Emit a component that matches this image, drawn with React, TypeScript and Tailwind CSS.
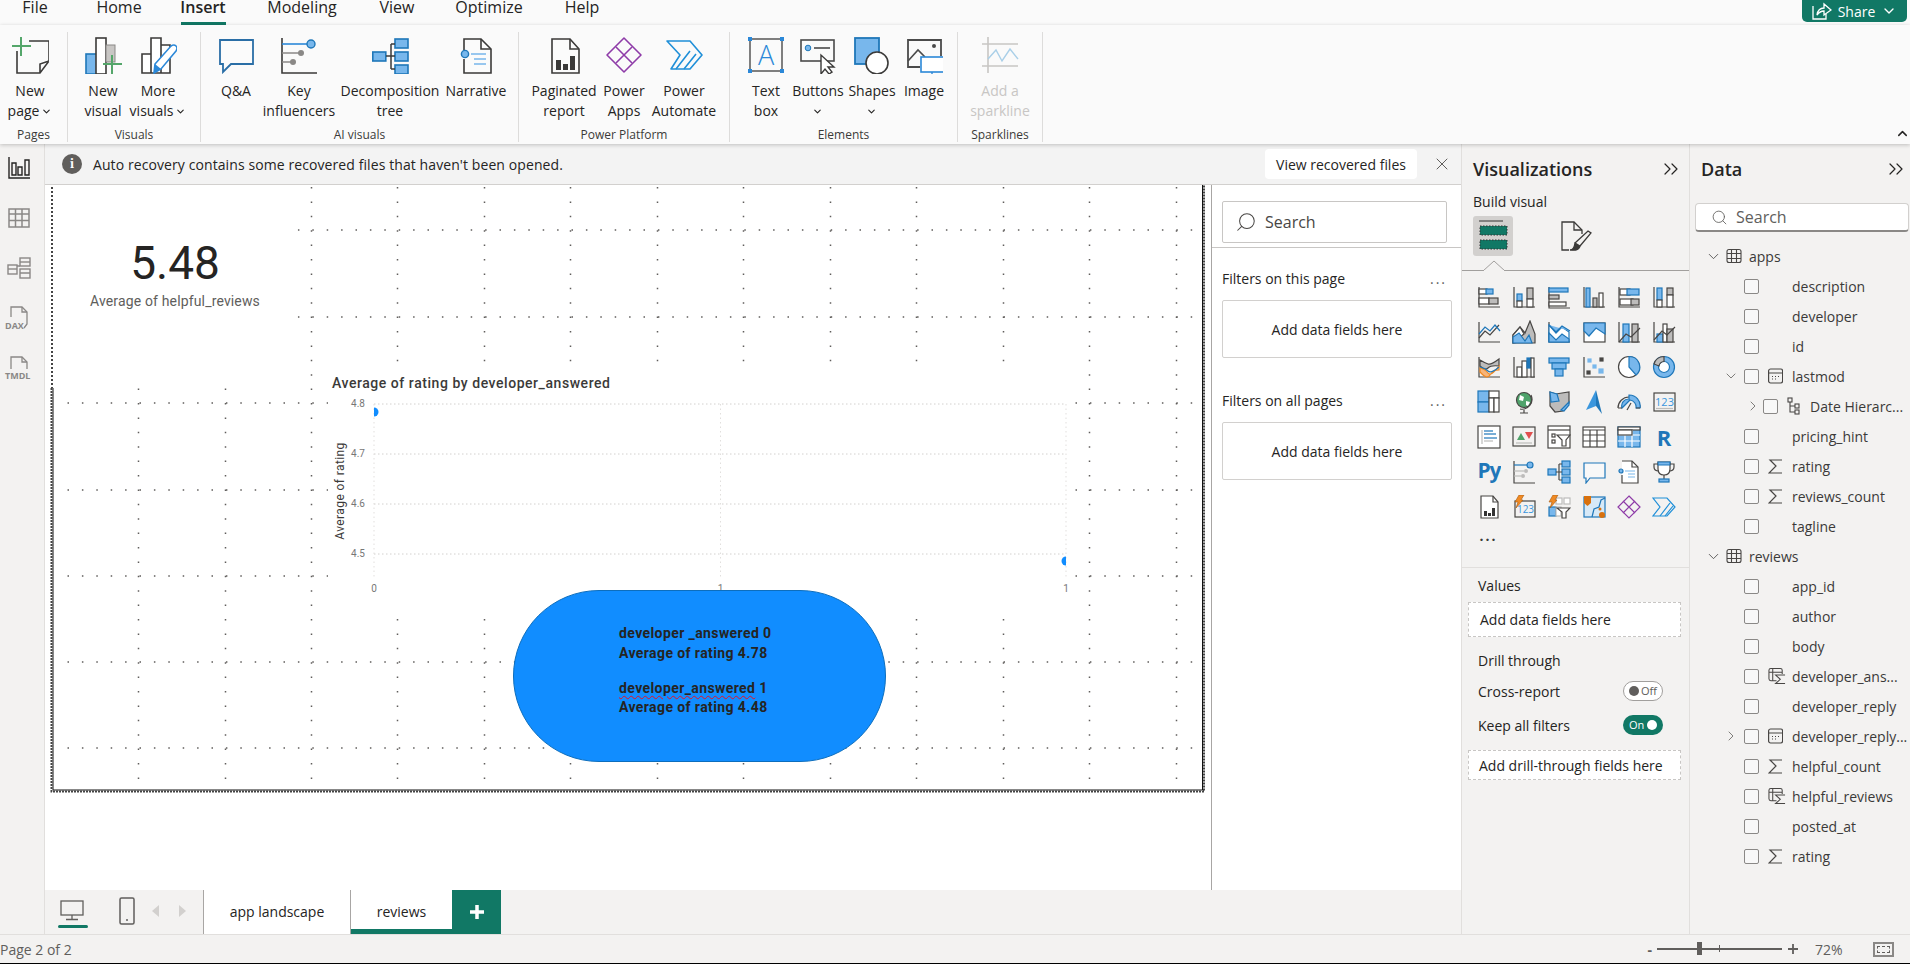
import type { ReactNode } from 'react';
import { ChevronDown, ChevronRight, ChevronUp, ChevronsRight, Search, X } from 'lucide-react';

const Dk = '#484644';
const Bl = '#1f77b9';
const Lb = '#78b7ec';
const Gy = '#bdbcbb';
const Wh = '#ffffff';

const r = (x: number, y: number, w: number, h: number, f = 'none', s = Dk) => (
  <rect x={x} y={y} width={w} height={h} fill={f} stroke={s} />
);
const p = (d: string, s = Dk, f = 'none') => <path d={d} stroke={s} fill={f} />;
const Ax = p('M2 2V22H23');

function Glyph({ children, size = 24 }: { children: ReactNode; size?: number }) {
  return (
    <svg width={size} height={size} viewBox="0 0 24 24" strokeWidth={1.2} className="shrink-0">
      {children}
    </svg>
  );
}

// small chart icons of the Visualizations pane, row by row
const vizIcons: ReactNode[] = [
  <>{Ax}{r(2, 4, 8, 5, Wh)}{r(9, 4, 7, 5, Lb, Bl)}{r(2, 13, 10, 6, Wh)}{r(12, 13, 9, 6, Gy)}</>,
  <>{Ax}{r(5, 9, 5, 7, Lb, Bl)}{r(5, 16, 5, 6, Wh)}{r(15, 3, 6, 11, Gy)}{r(15, 14, 6, 8, Wh)}</>,
  <>{p('M2 2V23H23')}{r(2, 3, 19, 4, Lb, Bl)}{r(2, 10, 10, 4, Gy)}{r(2, 17, 17, 4, Wh)}</>,
  <>{Ax}{r(4, 3, 4, 19, Lb, Bl)}{r(11, 13, 4, 9, Gy)}{r(17, 8, 4, 14, Wh)}</>,
  <>{Ax}{r(3, 4, 10, 6, Wh)}{r(10, 4, 12, 6, Lb, Bl)}{r(3, 14, 13, 6, Wh)}{r(14, 14, 8, 6, Gy)}</>,
  <>{Ax}{r(5, 3, 5, 12, Lb, Bl)}{r(5, 15, 5, 7, Wh)}{r(15, 3, 6, 7, Gy)}{r(15, 10, 6, 12, Wh)}</>,
  <>{Ax}{p('M2 18L8 11L13 15L22 5')}{p('M2 14L8 7L13 11L18 5L23 11', Bl)}</>,
  <>{p('M1 23V15L8 7L13 13L18 1L23 14V23Z', Dk, Gy)}{p('M1 15L8 7L12 14L8 17L12 21L1 23Z', Dk, Wh)}{p('M1 23V17L7 13L13 21L17 15L20 23Z', Bl, Lb)}</>,
  <>{Ax}{p('M2 5L9 13L15 7L22 12V22H2Z', Bl, Wh)}{p('M2 13L9 20L15 14L22 19V22H2Z', Bl, Lb)}{p('M2 5L9 12L15 6L23 11', Bl, Lb)}</>,
  <>{r(2, 3, 21, 19, Wh)}{p('M2 3H23V14L14 8L7 16L2 11Z', Bl, Lb)}</>,
  <>{Ax}{r(6, 4, 6, 18, Lb, Bl)}{r(15, 4, 6, 18, Gy)}{p('M2 22L9 14L14 17L23 8')}</>,
  <>{Ax}{r(5, 14, 6, 8, Lb, Bl)}{r(11, 4, 4, 18, Wh)}{r(15, 9, 6, 13, Gy)}{p('M2 20L10 11L15 15L23 7')}</>,
  <>{Ax}{p('M3 5Q8 8 11 9T22 4V11Q14 10 11 13T3 11Z', Dk, Gy)}{p('M3 13Q8 14 11 18T22 11V15Q16 15 13 20T3 17Z', '#f08a24', '#f7b57a')}{p('M3 12Q8 13 11 16T22 12', Bl)}</>,
  <>{Ax}{r(5, 12, 5, 10, Wh)}{r(10, 6, 5, 16, Wh)}{r(15, 3, 4, 10, Bl, Bl)}{r(19, 3, 3, 19, Wh)}</>,
  <>{r(2, 3, 20, 5, Lb, Bl)}{r(5, 8, 14, 6, Lb, Bl)}{r(8, 14, 8, 7, Lb, Bl)}</>,
  <>{Ax}{r(6, 4, 3, 3, Lb, Lb)}{r(18, 3, 3, 3, Dk)}{r(11, 10, 3, 3, Lb, Lb)}{r(17, 14, 4, 4, Lb, Lb)}{r(5, 16, 3, 3, Dk)}</>,
  <><circle cx="12" cy="12" r="10.5" fill={Wh} stroke={Dk} />{p('M12 1.5A10.5 10.5 0 0 1 19 20L12 12Z', Bl, Lb)}</>,
  <><circle cx="12" cy="12" r="10.5" fill={Lb} stroke={Bl} /><circle cx="12" cy="12" r="5.5" fill={Wh} stroke={Bl} />{p('M12 1.5A10.5 10.5 0 0 0 2 9L7 11A5.5 5.5 0 0 1 12 6.5Z', Dk, Gy)}</>,
  <>{r(1, 1, 11, 11, Lb, Bl)}{r(1, 12, 11, 10, Lb, Bl)}{r(12, 1, 10, 7, Wh)}{r(12, 8, 5, 14, Wh)}{r(17, 8, 5, 14, Wh)}</>,
  <><circle cx="12" cy="10" r="7.5" fill="#4fa36b" stroke={Dk} /><path d="M8 5l4 2-1 4-4-1zM14 11l4 1-2 4-2-1z" fill="#fff" />{p('M19 5A10 10 0 0 1 8 19M12 20V23M8 23H16')}</>,
  <>{p('M3 2L9 4L15 3L22 2V13L16 21L8 22L3 16Z', Dk, Gy)}{p('M3 2L10 4L12 11L4 12Z', Bl, Lb)}{p('M14 20L22 12V15L17 21Z', Bl, Lb)}</>,
  <><path d="M14 0L4 20L14 16Z" fill="#3a96dd" /><path d="M14 0L20 24L14 16Z" fill="#1f77b9" /></>,
  <>{p('M1 18A11 11 0 0 1 23 18', Dk)}<path d="M5 18A7 7 0 0 1 12 9V5A11 11 0 0 1 23 18H19A7 7 0 0 0 13 10Z" fill={Lb} stroke={Bl} />{p('M10 20L14 13', Dk)}{p('M1 18H5M19 18H23')}</>,
  <>{r(2, 3, 21, 18, '#f3f2f1')}<text x="12.5" y="16" fontSize="11" fill="#3a96dd" textAnchor="middle" stroke="none">123</text>{p('M4 18.5H21', Gy)}</>,
  <>{r(1, 1, 22, 22, Wh)}{p('M5 5V19', Gy)}{p('M7 6H16', Bl)}{p('M7 9H19', Bl)}{p('M7 13H20', Bl)}{p('M7 16H16', Gy)}</>,
  <>{r(1, 2, 22, 19, '#f3f2f1')}<path d="M5 15L9 8L13 15Z" fill="#4fa36b" /><path d="M13 7H21L17 14Z" fill="#e0504f" />{p('M4 18H20', Gy)}</>,
  <>{r(1, 1, 22, 22, Wh)}{p('M1 5H23')}{r(5, 9, 3, 3)}{r(5, 15, 3, 3)}<path d="M10 10H23L19 15V21H15V15Z" fill={Wh} stroke={Dk} /></>,
  <>{r(1, 2, 22, 20, Wh)}{p('M1 5H23M1 10H23M1 16H23M8 5V22M15 5V22')}</>,
  <>{r(1, 2, 22, 20, Lb, Bl)}{r(1, 2, 22, 3, Wh)}{p('M1 10H23M1 16H23M8 5V22M15 5V22', Wh)}{r(1, 5, 14, 5, Wh, Dk)}</>,
  <text x="12" y="21" fontSize="22" fontWeight="700" fill="#1f77b9" textAnchor="middle" stroke="none">R</text>,
  <text x="12" y="18" fontSize="21" fontWeight="700" fill="#1f77b9" textAnchor="middle" stroke="none" letterSpacing="-1">Py</text>,
  <>{p('M2 1V23H23')}{p('M2 5H15', Bl)}<circle cx="18" cy="5" r="3" fill={Lb} stroke={Bl} />{p('M2 11H12', Gy)}<circle cx="14" cy="11" r="2" fill={Gy} />{p('M2 16H9', Gy)}<circle cx="11" cy="16" r="2" fill={Gy} /></>,
  <>{r(1, 9, 8, 6, Lb, Bl)}{r(15, 1, 8, 6, Lb, Bl)}{r(15, 9, 8, 6, Lb, Bl)}{r(15, 17, 8, 6, Lb, Bl)}{p('M9 12H15M12 4V20M12 4H15M12 20H15')}</>,
  <>{p('M2 3H23V18H8L4 23V18H2Z', Bl, '#f8f8f8')}</>,
  <>{p('M5 1H15L21 7V23H5V15', Dk, Wh)}{p('M15 1V7H21')}<circle cx="4" cy="11" r="2" fill={Lb} stroke={Bl} />{p('M8 11H18M11 14H18M11 17H18', Lb)}</>,
  <>{p('M6 2H18V9Q18 15 12 15Q6 15 6 9Z', Dk, '#fff')}{p('M6 2H18V5H6Z', Bl, Lb)}{p('M6 4H2V7Q2 11 7 11M18 4H22V7Q22 11 17 11M12 15V19')}{r(7, 19, 10, 3, Lb, Bl)}</>,
  <>{p('M4 1H16L21 7V23H4Z', Dk, Wh)}{p('M16 1V7H21')}<rect x="7" y="16" width="3" height="5" fill="#333" /><rect x="11" y="18" width="3" height="3" fill="#333" /><rect x="15" y="13" width="3" height="8" fill="#333" /></>,
  <>{r(3, 6, 20, 16, '#f3f2f1')}<text x="13.5" y="18" fontSize="10" fill="#3a96dd" textAnchor="middle" stroke="none">123</text><path d="M7 0H12L9 5H11L4 13L6 7H3Z" fill="#f08a24" stroke="#a85b10" strokeWidth=".6" /></>,
  <>{r(9, 3, 6, 6, Wh, Gy)}{r(17, 3, 6, 6, Wh, Gy)}{r(2, 12, 7, 9, Lb, Bl)}{r(9, 12, 5, 9, Wh, Gy)}<path d="M10 13H23L19 17V23H15V17Z" fill={Wh} stroke={Dk} /><path d="M6 0H11L8 5H10L3 13L5 7H2Z" fill="#f08a24" stroke="#a85b10" strokeWidth=".6" /></>,
  <>{r(2, 2, 21, 20, '#d7e9f7', Bl)}{p('M10 22L12 14L17 12L19 5L23 3', Bl, 'none')}<path d="M2 1H9V8L5.5 11L2 8Z" fill="#d8710e" /><circle cx="20" cy="20" r="3" fill="#d8710e" /><circle cx="18" cy="14" r="1.5" fill="#d8710e" /></>,
  <>{p('M12 1L23 12L12 23L1 12Z', '#8e3ba8', 'none')}{p('M6 6L12 12L6 18M18 6L12 12L18 18', '#8e3ba8')}</>,
  <>{p('M1 3H15L23 12L15 21H1L8 12Z', '#1f8fd8', 'none')}{p('M8 21L18 8M13 21L21 11', '#1f8fd8')}</>,
];

const ribbonIcons: Record<string, ReactNode> = {
  newPage: (
    <>
      <path d="M5 14V36H28L37 24V4H17M28 36V27L37 24" stroke="#3b3a39" fill="none" strokeWidth="1.6" />
      <path d="M9 0V19M0 9H19" stroke="#54a66a" strokeWidth="2" />
    </>
  ),
  newVisual: (
    <>
      <rect x="1" y="17" width="13" height="20" fill={Lb} stroke={Bl} strokeWidth="1.6" />
      <rect x="11" y="1" width="10" height="36" fill={Wh} stroke="#3b3a39" strokeWidth="1.6" />
      <rect x="21" y="8" width="9" height="17" fill="#c8c6c4" stroke="#8a8886" />
      <path d="M27 18V37M18 27H37" stroke="#54a66a" strokeWidth="2" />
    </>
  ),
  moreVisuals: (
    <>
      <path d="M2 36V17H11V36ZM11 36V1H21V36H11M21 8H30V36H21" fill={Wh} stroke="#3b3a39" strokeWidth="1.6" />
      <path d="M14 36L15 27L31 9Q34 7 36 9T36 14L21 32Z" fill={Wh} stroke="#2b88d8" strokeWidth="1.6" />
      <path d="M15 27L21 32L14 36Z" fill="#2b88d8" />
    </>
  ),
  qa: <path d="M2 3H35V27H13L5 35V27H2Z" fill="#fbfbfb" stroke="#2a6ea6" strokeWidth="1.8" />,
  key: (
    <>
      <path d="M1 1V36H36" stroke="#3b3a39" fill="none" strokeWidth="1.6" />
      <path d="M1 7H26" stroke="#2b88d8" strokeWidth="1.6" />
      <circle cx="30" cy="7" r="4" fill={Lb} stroke={Bl} strokeWidth="1.4" />
      <path d="M1 16H18M1 25H10" stroke="#8a8886" strokeWidth="1.6" />
      <circle cx="20" cy="16" r="3" fill="#8a8886" />
      <circle cx="12" cy="25" r="3" fill="#8a8886" />
    </>
  ),
  decomp: (
    <>
      <rect x="0.8" y="15" width="13" height="9" fill={Lb} stroke={Bl} strokeWidth="1.6" />
      <rect x="23" y="2" width="13" height="9" fill={Lb} stroke={Bl} strokeWidth="1.6" />
      <rect x="23" y="15" width="13" height="9" fill={Lb} stroke={Bl} strokeWidth="1.6" />
      <rect x="23" y="28" width="13" height="9" fill={Lb} stroke={Bl} strokeWidth="1.6" />
      <path d="M14 19H23M19 7V32M19 7H23M19 32H23" stroke="#3b3a39" strokeWidth="1.5" />
    </>
  ),
  narrative: (
    <>
      <path d="M6 13V2H23L33 12V36H6V22" stroke="#3b3a39" fill="#fbfbfb" strokeWidth="1.6" />
      <path d="M23 2V12H33" stroke="#3b3a39" fill="none" strokeWidth="1.6" />
      <circle cx="7" cy="17" r="3.6" fill={Lb} stroke={Bl} strokeWidth="1.4" />
      <path d="M13 17H28M16 22H28M16 27H28" stroke={Lb} strokeWidth="1.6" />
    </>
  ),
  paginated: (
    <>
      <path d="M6 2H24L33 12V36H6Z" stroke="#3b3a39" fill="#fbfbfb" strokeWidth="1.6" />
      <path d="M24 2V12H33" stroke="#3b3a39" fill="none" strokeWidth="1.6" />
      <rect x="10" y="23" width="5" height="10" fill="#3b3a39" />
      <rect x="17" y="27" width="5" height="6" fill="#3b3a39" />
      <rect x="24" y="19" width="5" height="14" fill="#3b3a39" />
    </>
  ),
  apps: (
    <g stroke="#8e3ba8" strokeWidth="1.6" fill="none" strokeLinejoin="round">
      <path d="M18 1L35 18L18 35L1 18Z" />
      <path d="M10 10L18 18L10 26M26 10L18 18L26 26" />
    </g>
  ),
  automate: (
    <g stroke="#1f8fd8" strokeWidth="1.6" fill="none" strokeLinejoin="round">
      <path d="M1 4H24L36 18L24 32H5L14 18Z" />
      <path d="M10 32L24 14M18 32L30 17" />
    </g>
  ),
  textBox: (
    <>
      <rect x="2" y="2" width="32" height="32" fill="none" stroke="#4a4a4a" strokeWidth="1.4" />
      <g fill="#2b88d8">
        <rect x="0" y="0" width="4" height="4" />
        <rect x="32" y="0" width="4" height="4" />
        <rect x="0" y="32" width="4" height="4" />
        <rect x="32" y="32" width="4" height="4" />
      </g>
      <text x="18" y="28" fontSize="27" fill="#2b88d8" textAnchor="middle" fontFamily="Open Sans, sans-serif" fontWeight="300">A</text>
    </>
  ),
  buttons: (
    <>
      <rect x="1" y="3" width="33" height="21" fill="none" stroke="#4a4a4a" strokeWidth="1.6" />
      <circle cx="8" cy="11" r="2.8" fill={Lb} stroke={Bl} />
      <path d="M14 11H30" stroke="#4a4a4a" strokeWidth="1.6" />
      <path d="M21 18V37L25 32L29 37L32 35L28 30H34Z" fill={Wh} stroke="#3b3a39" strokeWidth="1.4" />
    </>
  ),
  shapes: (
    <>
      <rect x="1" y="1" width="24" height="26" fill={Lb} stroke={Bl} strokeWidth="1.8" />
      <circle cx="23" cy="26" r="11" fill={Wh} stroke="#3b3a39" strokeWidth="1.6" />
    </>
  ),
  image: (
    <>
      <path d="M14 30H2V3H35V19" fill="none" stroke="#4a4a4a" strokeWidth="1.8" />
      <path d="M2 24L12 13L19 20" fill="none" stroke="#4a4a4a" strokeWidth="1.6" />
      <circle cx="28" cy="9" r="2" fill="#4a4a4a" />
      <rect x="15" y="20" width="23" height="15" fill={Wh} stroke="#2b88d8" strokeWidth="1.6" />
      <path d="M26 35V38M22 38.5H30" stroke="#2b88d8" strokeWidth="1.4" />
    </>
  ),
  sparkline: (
    <>
      <path d="M6 0V36M0 7H36M0 29H36" stroke="#c8c6c4" strokeWidth="1.6" />
      <path d="M6 22L14 13L20 24L28 12L36 22" stroke="#a9cfe8" fill="none" strokeWidth="1.4" />
    </>
  ),
};

function RibbonItem({ icon, lines, width, disabled, caret }: { icon: string; lines: string[]; width: number; disabled?: boolean; caret?: 'inline' | 'below' }) {
  return (
    <div className="flex shrink-0 flex-col items-center" style={{ width }}>
      <svg width="38" height="38" viewBox="-1 -1 38 38" className="mt-[4px] shrink-0">
        {ribbonIcons[icon]}
      </svg>
      <div className={`mt-[7px] whitespace-nowrap text-center text-[14px] leading-[20px] ${disabled ? 'text-[#c8c6c4]' : 'text-[#252423]'}`}>
        {lines.map((l, i) => (
          <div key={l} className="flex items-center justify-center gap-[2px]">
            {l}
            {caret === 'inline' && i === 1 && <ChevronDown size={11} strokeWidth={2.4} />}
          </div>
        ))}
        {caret === 'below' && (
          <div className="flex h-[20px] items-center justify-center">
            <ChevronDown size={11} strokeWidth={2.4} />
          </div>
        )}
      </div>
    </div>
  );
}

function RibbonGroup({ label, width, pad = 0, children }: { label: string; width: number; pad?: number; children: ReactNode }) {
  return (
    <div className="flex h-[110px] shrink-0 flex-col border-r border-[#dddcdb]" style={{ width }}>
      <div className="flex h-[96px] shrink-0" style={{ paddingLeft: pad }}>
        {children}
      </div>
      <div className="text-center text-[12px] leading-[14px] text-[#3b3a39]">{label}</div>
    </div>
  );
}

const tabs = [
  { name: 'File', w: 'w-[70px]' },
  { name: 'Home', w: 'w-[98px]' },
  { name: 'Insert', w: 'w-[70px]' },
  { name: 'Modeling', w: 'w-[128px]' },
  { name: 'View', w: 'w-[62px]' },
  { name: 'Optimize', w: 'w-[122px]' },
  { name: 'Help', w: 'w-[64px]' },
];

function TopBar() {
  return (
    <div className="flex h-[25px] shrink-0 bg-[#fafafa]">
      {tabs.map((t) => (
        <div key={t.name} className={`relative h-full text-center text-[16px] leading-[15px] text-[#252423] ${t.w} ${t.name === 'Insert' ? 'font-semibold' : ''}`}>
          {t.name}
          {t.name === 'Insert' && <div className="absolute bottom-0 left-[13px] h-[3px] w-[45px] bg-[#117865]" />}
        </div>
      ))}
      <div className="ml-auto mr-[3px] flex h-[22px] w-[105px] items-center justify-center gap-[6px] rounded-b-[5px] bg-[#117865] text-[14px] text-white">
        <svg width="20" height="18" viewBox="0 0 20 18" fill="none" stroke="#fff" strokeWidth="1.3">
          <path d="M1 4V17H14V12" />
          <path d="M5 13Q6 6 12 6V2L19 8L12 13V9Q8 9 5 13Z" />
        </svg>
        Share
        <ChevronDown size={16} />
      </div>
    </div>
  );
}

function Ribbon() {
  return (
    <div className="relative z-10 flex h-[119px] shrink-0 bg-[#fafafa] pt-[7px] shadow-[0_1px_4px_rgba(0,0,0,0.22)]">
      <RibbonGroup label="Pages" width={68}>
        <RibbonItem icon="newPage" lines={['New', 'page']} width={60} caret="inline" />
      </RibbonGroup>
      <RibbonGroup label="Visuals" width={133} pad={7}>
        <RibbonItem icon="newVisual" lines={['New', 'visual']} width={56} />
        <RibbonItem icon="moreVisuals" lines={['More', 'visuals']} width={54} caret="inline" />
      </RibbonGroup>
      <RibbonGroup label="AI visuals" width={318} pad={10}>
        <RibbonItem icon="qa" lines={['Q&A']} width={50} />
        <RibbonItem icon="key" lines={['Key', 'influencers']} width={76} />
        <RibbonItem icon="decomp" lines={['Decomposition', 'tree']} width={106} />
        <RibbonItem icon="narrative" lines={['Narrative']} width={66} />
      </RibbonGroup>
      <RibbonGroup label="Power Platform" width={211} pad={11}>
        <RibbonItem icon="paginated" lines={['Paginated', 'report']} width={68} />
        <RibbonItem icon="apps" lines={['Power', 'Apps']} width={52} />
        <RibbonItem icon="automate" lines={['Power', 'Automate']} width={68} />
      </RibbonGroup>
      <RibbonGroup label="Elements" width={228} pad={13}>
        <RibbonItem icon="textBox" lines={['Text', 'box']} width={46} />
        <RibbonItem icon="buttons" lines={['Buttons']} width={58} caret="below" />
        <RibbonItem icon="shapes" lines={['Shapes']} width={50} caret="below" />
        <RibbonItem icon="image" lines={['Image']} width={54} />
      </RibbonGroup>
      <RibbonGroup label="Sparklines" width={85}>
        <RibbonItem icon="sparkline" lines={['Add a', 'sparkline']} width={84} disabled />
      </RibbonGroup>
      <ChevronUp size={15} strokeWidth={2.4} className="absolute bottom-[3px] right-0 text-[#252423]" />
    </div>
  );
}

function LeftRail() {
  return (
    <div className="flex w-[45px] shrink-0 flex-col items-center gap-[22px] border-r border-[#e1dfdd] bg-[#f3f2f1] pt-[10px] pr-[7px]">
      <svg width="28" height="28" viewBox="0 0 28 28" fill="none" stroke="#252423" strokeWidth="1.4">
        <path d="M4 3V24H25" />
        <path d="M7 9H11V21H7ZM13 13H17V21H13ZM20 6H24V21H20Z" />
      </svg>
      <svg width="28" height="28" viewBox="0 0 28 28" fill="none" stroke="#8a8886" strokeWidth="1.5">
        <rect x="4" y="5" width="20" height="18" />
        <path d="M4 10H24M4 16.500H24M10.500 5V23M17 5V23" />
      </svg>
      <svg width="28" height="28" viewBox="0 0 28 28" fill="none" stroke="#8a8886" strokeWidth="1.4">
        <rect x="3" y="11" width="9" height="9" />
        <path d="M3 15H12" />
        <rect x="15" y="4" width="10" height="8" />
        <path d="M15 8H25" />
        <rect x="15" y="15" width="10" height="9" />
        <path d="M15 19H25M12 12H15" />
      </svg>
      <svg width="30" height="28" viewBox="0 0 30 28" fill="none" stroke="#8a8886" strokeWidth="1.3">
        <path d="M7 13V3H18L23 8V20L20 24" />
        <path d="M18 3V8H23" />
        <text x="1" y="25" fontSize="9" fontWeight="700" fill="#8a8886" stroke="none">DAX</text>
      </svg>
      <svg width="30" height="28" viewBox="0 0 30 28" fill="none" stroke="#8a8886" strokeWidth="1.3">
        <path d="M7 15V3H18L23 8V15" />
        <path d="M18 3V8H23" />
        <text x="1" y="25" fontSize="9" fontWeight="700" fill="#8a8886" stroke="none">TMDL</text>
      </svg>
    </div>
  );
}

function Notice() {
  return (
    <div className="flex h-[41px] shrink-0 items-center border-b border-[#d2d0ce] bg-[#f3f3f3] pl-[17px]">
      <div className="flex h-[20px] w-[20px] items-center justify-center rounded-full bg-[#605e5c] font-serif text-[13px] font-bold text-white">i</div>
      <div className="ml-[11px] text-[14px] tracking-[0.09px] text-[#252423]">Auto recovery contains some recovered files that haven't been opened.</div>
      <div className="ml-auto flex h-[30px] w-[152px] items-center justify-center rounded-[4px] bg-white text-[14px] text-[#252423]">View recovered files</div>
      <X size={20} strokeWidth={1.2} className="ml-[15px] mr-[9px] text-[#605e5c]" />
    </div>
  );
}

const dotCols = [139, 226, 312, 398, 485, 571, 658, 744, 831, 917, 1004, 1090, 1177];
const dotRows = [230, 317, 403, 490, 576, 662, 748];

function Chart() {
  const grid = [404, 454, 504, 554];
  return (
    <svg viewBox="328 372 744 238" className="absolute left-[283px] top-[187px] h-[238px] w-[744px] bg-white">
      <text x="332" y="388" fontSize="14" fontWeight="500" letterSpacing="0.55" fill="#3b3a39" fontFamily="Roboto, sans-serif">Average of rating by developer_answered</text>
      {grid.map((y, i) => (
        <g key={y}>
          <line x1="374" x2="1066" y1={y} y2={y} stroke="#d2d0ce" strokeDasharray="1.5 2.5" />
          <text x="365" y={y + 3} fontSize="10" textAnchor="end" fill="#777" fontFamily="Roboto, sans-serif">{(4.8 - i / 10).toFixed(1)}</text>
        </g>
      ))}
      {[374, 720.500, 1066].map((x, i) => (
        <g key={x}>
          <line x1={x} x2={x} y1="404" y2="578" stroke="#e1dfdd" strokeDasharray="1.5 3" />
          <text x={x} y="592" fontSize="10" textAnchor="middle" fill="#777" fontFamily="Roboto, sans-serif">{i === 0 ? 0 : 1}</text>
        </g>
      ))}
      <path d="M374 407.500A4.500 4.500 0 0 1 374 416.500Z" fill="#118dff" />
      <path d="M1066 556.500A4.500 4.500 0 0 1 1066 565.500Z" fill="#118dff" transform="rotate(180 1066 561)" />
      <text transform="translate(344 491) rotate(-90)" fontSize="12" letterSpacing="0.4" textAnchor="middle" fill="#3b3a39" fontFamily="Roboto, sans-serif">Average of rating</text>
    </svg>
  );
}

function ReportCanvas() {
  return (
    <div className="relative min-w-0 flex-1 overflow-hidden bg-white [font-family:Roboto,sans-serif]">
      <svg viewBox="46 185 1165 705" className="absolute inset-0 h-full w-full">
        {dotCols.map((x) => (
          <line key={x} x1={x} x2={x} y1="187" y2="791" stroke="#605e5c" strokeWidth="1.500" strokeDasharray="1.5 12.9" />
        ))}
        {dotRows.map((y) => (
          <line key={y} x1="68" x2="1200" y1={y} y2={y} stroke="#605e5c" strokeWidth="1.500" strokeDasharray="1.5 12.9" />
        ))}
        <rect x="54" y="185" width="244" height="203" fill="#fff" />
        <line x1="52.500" x2="52.500" y1="187" y2="388" stroke="#444" strokeWidth="2" strokeDasharray="2 2" />
        <path d="M53.500 388V790H1203V185" fill="none" stroke="#111" />
        <path d="M52 388V791.500H1204.500V185" fill="none" stroke="#444" strokeWidth="2" strokeDasharray="2 1" />
      </svg>
      <div className="absolute left-[7px] top-[55px] flex w-[246px] flex-col items-center">
        <div className="text-[46px] leading-[46px] text-[#252423]">5.48</div>
        <div className="mt-[5px] text-[14px] leading-[20px] tracking-[0.15px] text-[#605e5c]">Average of helpful_reviews</div>
      </div>
      <Chart />
      <div className="absolute left-[468px] top-[405px] h-[172px] w-[373px] rounded-full border border-[#0d6ebd] bg-[#118dff] pl-[105px] pt-[32px] text-[14px] font-bold leading-[20px] tracking-[0.4px] text-[#252423]">
        <div>developer _answered 0</div>
        <div>Average of rating 4.78</div>
        <div className="h-[16px]" />
        <div className="leading-[19px]">
          <span className="underline decoration-[#e81123] decoration-wavy decoration-1 underline-offset-2">developer_answered</span> 1
        </div>
        <div className="leading-[19px]">Average of rating 4.48</div>
      </div>
    </div>
  );
}

function FilterPane() {
  const boxCls = 'flex h-[58px] w-[230px] items-center justify-center rounded-[2px] border border-[#d2d0ce] text-[14px] text-[#252423]';
  const labelCls = 'flex w-[225px] items-center justify-between text-[14px] leading-[20px] text-[#252423]';
  return (
    <div className="w-[250px] shrink-0 border-l border-[#a8a6a4] bg-white">
      <div className="h-[63px] border-b border-[#c8c6c4] pl-[10px] pt-[16px]">
        <div className="flex h-[42px] w-[225px] items-center gap-[8px] rounded-[2px] border border-[#c8c6c4] pl-[12px] text-[16px] text-[#484644]">
          <Search size={22} strokeWidth={1.1} className="-scale-x-100" />
          Search
        </div>
      </div>
      <div className="pl-[10px]">
        <div className={`${labelCls} mt-[21px]`}>
          Filters on this page
          <span className="tracking-[2px] text-[#605e5c]">...</span>
        </div>
        <div className={`${boxCls} mt-[11px]`}>Add data fields here</div>
        <div className={`${labelCls} mt-[33px]`}>
          Filters on all pages
          <span className="tracking-[2px] text-[#605e5c]">...</span>
        </div>
        <div className={`${boxCls} mt-[11px]`}>Add data fields here</div>
      </div>
    </div>
  );
}

function PageTabs() {
  return (
    <div className="flex h-[44px] shrink-0 bg-[#f3f2f1]">
      <div className="relative flex w-[159px] items-start border-r border-[#a8a6a4]">
        <svg width="26" height="22" viewBox="0 0 26 22" fill="none" stroke="#605e5c" strokeWidth="1.300" className="ml-[14px] mt-[9px]">
          <rect x="2" y="2" width="22" height="14" />
          <path d="M13 16V20M7 20.500H19" />
        </svg>
        <div className="absolute bottom-[6px] left-[13px] h-[3px] w-[30px] rounded-full bg-[#117865]" />
        <svg width="18" height="30" viewBox="0 0 18 30" fill="none" stroke="#605e5c" strokeWidth="1.500" className="ml-[33px] mt-[6px]">
          <rect x="2" y="2" width="14" height="26" rx="1.500" />
          <path d="M8 24H10" />
        </svg>
        <div className="ml-[16px] mt-[15px] h-0 w-0 border-y-[6px] border-r-[7px] border-y-transparent border-r-[#d2d0ce]" />
        <div className="ml-[20px] mt-[15px] h-0 w-0 border-y-[6px] border-l-[7px] border-y-transparent border-l-[#d2d0ce]" />
      </div>
      <div className="flex w-[147px] items-center justify-center border-r border-[#a8a6a4] bg-white pb-[2px] text-[14px] text-[#252423]">app landscape</div>
      <div className="flex w-[101px] items-center justify-center border-b-[5px] border-[#117865] bg-white pt-[3px] text-[14px] text-[#252423]">reviews</div>
      <div className="flex w-[49px] items-center justify-center bg-[#117865] text-white">
        <svg width="16" height="16" viewBox="0 0 16 16" stroke="#fff" strokeWidth="3.500">
          <path d="M8 1V15M1 8H15" />
        </svg>
      </div>
    </div>
  );
}

function Toggle({ on }: { on?: boolean }) {
  return on ? (
    <div className="flex h-[20px] w-[40px] items-center justify-between rounded-full bg-[#117865] pl-[6px] pr-[6px] text-[11px] text-white">
      On
      <span className="h-[10px] w-[10px] rounded-full bg-white" />
    </div>
  ) : (
    <div className="flex h-[20px] w-[40px] items-center justify-between rounded-full border border-[#a19f9d] bg-white pl-[5px] pr-[5px] text-[11px] text-[#605e5c]">
      <span className="h-[10px] w-[10px] rounded-full bg-[#605e5c]" />
      Off
    </div>
  );
}

function VizPane() {
  return (
    <div className="flex w-[228px] shrink-0 flex-col border-l border-[#e1dfdd] bg-[#f3f2f1]">
      <div className="flex h-[50px] shrink-0 items-center justify-between pl-[11px] pr-[6px] text-[18px] font-semibold text-[#252423]">
        Visualizations
        <ChevronsRight size={24} strokeWidth={1.2} />
      </div>
      <div className="pl-[11px] text-[14px] font-medium leading-[16px] text-[#252423]">Build visual</div>
      <div className="relative mt-[6px] flex h-[55px] shrink-0 border-b border-[#a19f9d] pl-[11px]">
        <div className="flex h-[40px] w-[40px] items-center justify-center rounded-[3px] bg-[#d2d0ce]">
          <svg width="30" height="32" viewBox="0 0 30 32">
            <path d="M1 1H25" stroke="#333" />
            <rect x="2" y="6" width="27" height="9" fill="#117865" stroke="#333" strokeDasharray="1.500 1.500" />
            <rect x="2" y="20" width="27" height="9" fill="#117865" stroke="#333" strokeDasharray="1.500 1.500" />
          </svg>
        </div>
        <svg width="32" height="32" viewBox="0 0 32 32" fill="none" stroke="#3b3a39" strokeWidth="1.300" className="ml-[47px] mt-[4px]">
          <path d="M9 30H2V2H14L22 10V14" />
          <path d="M14 2V10H22" />
          <path d="M15 23L28 11L31 13L20 26" />
          <path d="M10 30Q14 30 15 23L20 26Q19 31 10 30Z" fill="#3b3a39" />
        </svg>
        <svg width="22" height="11" viewBox="0 0 22 11" className="absolute bottom-[-1px] left-[21px]">
          <path d="M0 11L11 1L22 11Z" fill="#f3f2f1" stroke="#a19f9d" />
          <path d="M1 11H21" stroke="#f3f2f1" strokeWidth="2" />
        </svg>
      </div>
      <div className="mt-[8px] grid grid-cols-[repeat(6,35px)] pl-[9px]">
        {vizIcons.map((icon, i) => (
          <div key={i} className="flex h-[35px] w-[35px] items-center justify-center">
            <Glyph>{icon}</Glyph>
          </div>
        ))}
        <div className="flex h-[35px] w-[35px] items-start justify-center text-[14px] font-bold leading-[24px] tracking-[2px] text-[#3b3a39]">...</div>
      </div>
      <div className="mt-[8px] border-t border-[#e1dfdd] pl-[6px] pr-[8px] text-[14px] text-[#252423]">
        <div className="pl-[10px] pt-[8px] leading-[20px]">Values</div>
        <div className="mt-[6px] flex h-[35px] items-center border border-dashed border-[#c8c6c4] bg-white pl-[11px]">Add data fields here</div>
        <div className="mt-[14px] pl-[10px] font-medium leading-[20px]">Drill through</div>
        <div className="mt-[10px] flex h-[20px] items-center justify-between pl-[10px] pr-[18px]">
          Cross-report
          <Toggle />
        </div>
        <div className="mt-[14px] flex h-[20px] items-center justify-between pl-[10px] pr-[18px]">
          Keep all filters
          <Toggle on />
        </div>
        <div className="mt-[15px] flex h-[30px] items-center border border-dashed border-[#c8c6c4] bg-white pl-[10px]">Add drill-through fields here</div>
      </div>
    </div>
  );
}

const TableIcon = (
  <svg width="16" height="16" viewBox="0 0 16 16" fill="none" stroke="#484644" strokeWidth="1.100">
    <rect x="1" y="1.500" width="14" height="13" rx="2" />
    <path d="M1 5.500H15M1 10.500H15M5.500 1.500V14.500M10.500 1.500V14.500" />
  </svg>
);
const fieldIcons: Record<string, ReactNode> = {
  sigma: (
    <svg width="15" height="16" viewBox="0 0 15 16" fill="none" stroke="#484644" strokeWidth="1.200">
      <path d="M14 2H2L8 8L1 15H14" />
    </svg>
  ),
  cal: (
    <svg width="15" height="16" viewBox="0 0 15 16" fill="none" stroke="#484644" strokeWidth="1.200">
      <rect x="0.600" y="1" width="14" height="14" rx="2" />
      <path d="M1 5H14M4 8.500H5M7 8.500H8M10 8.500H11M4 11H5M7 11H8" />
    </svg>
  ),
  calc: (
    <svg width="19" height="18" viewBox="0 0 19 18" fill="none" stroke="#484644" strokeWidth="1.100">
      <path d="M9 14H3Q1 14 1 12V3Q1 1 3 1H13Q15 1 15 3V7M1 5H15M5 1V14" />
      <path d="M18 8H8L13 12.500L8 17H18" />
    </svg>
  ),
  tree: (
    <svg width="14" height="18" viewBox="0 0 14 18" fill="none" stroke="#484644" strokeWidth="1.100">
      <rect x="1" y="1" width="4" height="4" />
      <rect x="8" y="7" width="4" height="4" />
      <rect x="8" y="13" width="4" height="4" />
      <path d="M3 5V15H8M3 9H8" />
    </svg>
  ),
};

type FieldRow = { name: string; icon?: string; expander?: 'open' | 'closed'; deep?: boolean };

const appsFields: FieldRow[] = [
  { name: 'description' },
  { name: 'developer' },
  { name: 'id' },
  { name: 'lastmod', icon: 'cal', expander: 'open' },
  { name: 'Date Hierarc...', icon: 'tree', expander: 'closed', deep: true },
  { name: 'pricing_hint' },
  { name: 'rating', icon: 'sigma' },
  { name: 'reviews_count', icon: 'sigma' },
  { name: 'tagline' },
];
const reviewsFields: FieldRow[] = [
  { name: 'app_id' },
  { name: 'author' },
  { name: 'body' },
  { name: 'developer_ans...', icon: 'calc' },
  { name: 'developer_reply' },
  { name: 'developer_reply...', icon: 'cal', expander: 'closed' },
  { name: 'helpful_count', icon: 'sigma' },
  { name: 'helpful_reviews', icon: 'calc' },
  { name: 'posted_at' },
  { name: 'rating', icon: 'sigma' },
];

function Field({ row }: { row: FieldRow }) {
  return (
    <div className={`flex h-[30px] items-center whitespace-nowrap ${row.deep ? 'pl-[55px]' : 'pl-[33px]'}`}>
      <div className={`flex items-center text-[#605e5c] ${row.deep ? 'w-[18px]' : 'w-[21px]'}`}>
        {row.expander === 'open' && <ChevronDown size={16} strokeWidth={1.2} />}
        {row.expander === 'closed' && <ChevronRight size={16} strokeWidth={1.2} />}
      </div>
      <div className="h-[15px] w-[15px] shrink-0 rounded-[2px] border border-[#8a8886] bg-[#f8f8f8]" />
      <div className={`ml-[9px] flex shrink-0 items-center ${row.deep ? 'w-[14px]' : 'w-[18px]'}`}>
        {row.icon && fieldIcons[row.icon]}
      </div>
      <div className={`${row.deep ? 'ml-[9px]' : 'ml-[6px]'} text-[#3b3a39]`}>{row.name}</div>
    </div>
  );
}

function TableRow({ name }: { name: string }) {
  return (
    <div className="flex h-[30px] items-center gap-[4px] pl-[15px] text-[#3b3a39]">
      <ChevronDown size={17} strokeWidth={1.1} />
      {TableIcon}
      <span className="ml-[3px]">{name}</span>
    </div>
  );
}

function DataPane() {
  return (
    <div className="flex w-[221px] shrink-0 flex-col border-l border-[#e1dfdd] bg-[#f3f2f1]">
      <div className="flex h-[50px] shrink-0 items-center justify-between pl-[11px] pr-[2px] text-[18px] font-semibold text-[#252423]">
        Data
        <ChevronsRight size={24} strokeWidth={1.2} />
      </div>
      <div className="ml-[5px] mt-[9px] flex h-[29px] w-[214px] shrink-0 items-center gap-[8px] rounded-[4px] border border-b-2 border-[#d2d0ce] border-b-[#8a8886] bg-white pl-[15px] text-[16px] text-[#605e5c]">
        <Search size={17} strokeWidth={1.2} />
        Search
      </div>
      <div className="mt-[9px] text-[14px]">
        <TableRow name="apps" />
        {appsFields.map((f) => <Field key={f.name} row={f} />)}
        <TableRow name="reviews" />
        {reviewsFields.map((f) => <Field key={f.name} row={f} />)}
      </div>
    </div>
  );
}

function StatusBar() {
  return (
    <div className="flex h-[30px] shrink-0 items-center border-y border-t-[#e1dfdd] border-b-black bg-[#f3f2f1] text-[14px] text-[#605e5c]">
      Page 2 of 2
      <div className="ml-auto flex items-center">
        <span className="font-bold">-</span>
        <div className="relative ml-[5px] h-[1.5px] w-[125px] bg-[#605e5c]">
          <div className="absolute left-[40px] top-[-6px] h-[13px] w-[5px] bg-[#605e5c]" />
          <div className="absolute left-[62px] top-[-3px] h-[7px] w-px bg-[#605e5c]" />
        </div>
        <svg width="12" height="12" viewBox="0 0 12 12" stroke="#605e5c" strokeWidth="1.800" className="ml-[5px]">
          <path d="M6 1V11M1 6H11" />
        </svg>
        <span className="ml-[16px] w-[40px]">72%</span>
        <div className="ml-[18px] mr-[16px] flex h-[15px] w-[21px] items-center justify-center border-2 border-[#8a8886]">
          <div className="h-[7px] w-[13px] border border-dashed border-[#605e5c]" />
        </div>
      </div>
    </div>
  );
}

export default function App() {
  return (
    <div className="flex h-[964px] w-[1910px] flex-col overflow-hidden bg-white [font-family:'Open_Sans',sans-serif]">
      <TopBar />
      <Ribbon />
      <div className="flex min-h-0 flex-1">
        <LeftRail />
        <div className="flex w-[1416px] shrink-0 flex-col">
          <Notice />
          <div className="flex min-h-0 flex-1">
            <ReportCanvas />
            <FilterPane />
          </div>
          <PageTabs />
        </div>
        <VizPane />
        <DataPane />
      </div>
      <StatusBar />
    </div>
  );
}
